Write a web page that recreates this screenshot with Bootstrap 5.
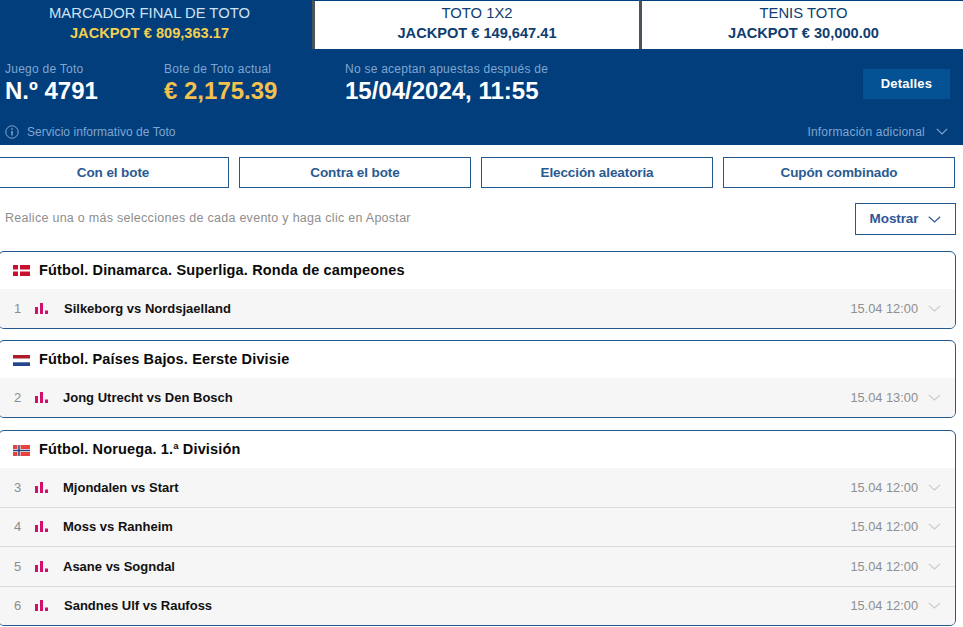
<!DOCTYPE html>
<html lang="es">
<head>
<meta charset="utf-8">
<title>Toto</title>
<link rel="stylesheet" href="https://cdn.jsdelivr.net/npm/bootstrap@5.3.0/dist/css/bootstrap.min.css">
<style>
html,body{height:627px;overflow:hidden}
body{font-family:"Liberation Sans",Arial,sans-serif;background:#fff;color:#111;width:963px}
.hero{background:#023e7b;height:145px}
.tabrow{height:49px}
.tabx{flex:0 0 auto;text-align:center;height:49px;background:#fff;color:#0f3d70;border-top:1px solid #023e7b;padding-top:3px}
.tabx.first{width:312px;background:#023e7b;color:#cfe2f5;padding-right:13px}
.tabx.second{width:327px;border-left:3px solid #4d535b}
.tabx.third{width:324px;border-left:3px solid #4d535b;padding-left:2px}
.tabname{font-size:14.8px;line-height:18px;margin-bottom:2px}
.tabjack{font-size:14.6px;line-height:18px;font-weight:700}
.first .tabjack{color:#f2d04f}
.inforow{height:61px}
.cellx{flex:0 0 auto;padding-top:13px}
.c1{width:164px;padding-left:5px}.c2{width:181px}.c3{width:518px}
.lbl{font-size:12px;line-height:15px;color:#7fa6d3;letter-spacing:.25px}
.val{font-size:24px;line-height:29px;font-weight:700;color:#fff;margin-top:-1px}
.val.gold{color:#f3c14d}
.detbtn{background:#045194;color:#fff;font-size:13px;font-weight:700;width:87px;height:30px;line-height:30px;padding:0;border:0;border-radius:0;margin-top:20px;letter-spacing:.2px}
.foot{height:35px;padding:8px 15px 0 5px;font-size:12px;color:#7fa6d3}
.svc{letter-spacing:.05px}
.more{letter-spacing:.2px}
.gapx{gap:11px}
.pickrow{margin:12px 8px 0 -3px;gap:10px}
.pick{flex:1 1 0;height:31px;line-height:29px;padding:0;border:1px solid #23598f;border-radius:0;background:#fff;color:#2a5a91;font-size:13.5px;font-weight:700;letter-spacing:-.1px}
.hintrow{height:32px;margin:15px 7px 0 5px}
.hint{font-size:12.5px;color:#8e8e8e;letter-spacing:.28px;padding-bottom:2px}
.showbtn{width:101px;height:32px;padding:0;border:1px solid #23598f;border-radius:0;background:#fff;color:#2f5896;font-size:13.5px;font-weight:700;letter-spacing:-.1px;gap:10px}
.grp{margin:0 7px 11.5px -2px;border:1px solid #23598f;border-radius:6px;overflow:hidden;background:#fff}
.grp.spaced{margin-bottom:12.5px}
.stack{margin-top:16px}
.grphead{height:37px;padding-left:14px;gap:9px;font-size:14.5px;font-weight:700;color:#0a0a0a;letter-spacing:.15px}
.grphead.lowered{padding-top:1px}
.evt{height:39.5px;background:#f6f6f6;border-top:1px solid #dcdcdc;padding:0 14px 0 15px;font-size:13px;color:#111}
.evt.top{border-top:0;height:38.5px}
.num{width:21px;font-size:13px;color:#8c8c8c;flex:0 0 auto}
.bars{flex:0 0 auto;margin-right:14px}
.mname{font-weight:700;flex:1 1 auto}
.nudge{padding-left:1px}
.when{font-size:12.8px;color:#8f8f8f;margin-right:10px}
</style>
</head>
<body>
<header class="hero">
  <nav class="d-flex tabrow">
    <div class="tabx first"><div class="tabname">MARCADOR FINAL DE TOTO</div><div class="tabjack">JACKPOT € 809,363.17</div></div>
    <div class="tabx second"><div class="tabname">TOTO 1X2</div><div class="tabjack">JACKPOT € 149,647.41</div></div>
    <div class="tabx third"><div class="tabname">TENIS TOTO</div><div class="tabjack">JACKPOT € 30,000.00</div></div>
  </nav>
  <div class="d-flex inforow">
    <div class="cellx c1"><div class="lbl">Juego de Toto</div><div class="val">N.º 4791</div></div>
    <div class="cellx c2"><div class="lbl">Bote de Toto actual</div><div class="val gold">€ 2,175.39</div></div>
    <div class="cellx c3"><div class="lbl">No se aceptan apuestas después de</div><div class="val">15/04/2024, 11:55</div></div>
    <button class="btn detbtn" type="button">Detalles</button>
  </div>
  <div class="d-flex align-items-center justify-content-between foot">
    <div class="d-flex align-items-center gap-2">
      <svg width="14" height="14" viewBox="0 0 14 14" fill="none" stroke="#7fa6d3"><circle cx="7" cy="7" r="6.2"/><path d="M7 6v4.5" stroke-width="1.5"/><path d="M7 3.2v1.5" stroke-width="1.5"/></svg>
      <span class="svc">Servicio informativo de Toto</span>
    </div>
    <div class="d-flex align-items-center gapx">
      <span class="more">Información adicional</span>
      <svg width="12" height="7" viewBox="0 0 12 7" fill="none" stroke="#7fa6d3" stroke-width="1.2"><path d="M.8.8 6 6 11.2.8"/></svg>
    </div>
  </div>
</header>
<main>
  <div class="d-flex pickrow">
    <button class="btn pick" type="button">Con el bote</button>
    <button class="btn pick" type="button">Contra el bote</button>
    <button class="btn pick" type="button">Elección aleatoria</button>
    <button class="btn pick" type="button">Cupón combinado</button>
  </div>
  <div class="d-flex align-items-center justify-content-between hintrow">
    <span class="hint">Realice una o más selecciones de cada evento y haga clic en Apostar</span>
    <button class="btn showbtn d-flex align-items-center justify-content-center" type="button"><span>Mostrar</span>
      <svg width="13" height="7" viewBox="0 0 13 7" fill="none" stroke="#2f5896" stroke-width="1.2"><path d="M.8.8 6.5 6 12.2.8"/></svg></button>
  </div>
  <div class="stack">
    <section class="grp">
      <div class="d-flex align-items-center grphead">
        <svg width="17" height="11" viewBox="0 0 17 11"><rect width="17" height="11" fill="#c8102e"/><path d="M0 5.5h17M6 0v11" stroke="#fff" stroke-width="2"/></svg>
        <span>Fútbol. Dinamarca. Superliga. Ronda de campeones</span>
      </div>
      <div class="d-flex align-items-center evt top">
        <span class="num">1</span>
        <svg class="bars" width="14" height="11" viewBox="0 0 14 11" fill="#d0106a"><rect y="4" width="3" height="7"/><rect x="5" width="3" height="11"/><rect x="10" y="7.5" width="3" height="3.5"/></svg>
        <span class="mname nudge">Silkeborg vs Nordsjaelland</span><span class="when">15.04 12:00</span>
        <svg width="13" height="7" viewBox="0 0 13 7" fill="none" stroke="#c9c9c9" stroke-width="1.1"><path d="M.8.8 6.5 6 12.2.8"/></svg>
      </div>
    </section>
    <section class="grp spaced">
      <div class="d-flex align-items-center grphead lowered">
        <svg width="17" height="11" viewBox="0 0 17 11"><rect width="17" height="3.7" fill="#ae1c28"/><rect y="3.7" width="17" height="3.6" fill="#fff"/><rect y="7.3" width="17" height="3.7" fill="#21468b"/></svg>
        <span>Fútbol. Países Bajos. Eerste Divisie</span>
      </div>
      <div class="d-flex align-items-center evt top">
        <span class="num">2</span>
        <svg class="bars" width="14" height="11" viewBox="0 0 14 11" fill="#d0106a"><rect y="4" width="3" height="7"/><rect x="5" width="3" height="11"/><rect x="10" y="7.5" width="3" height="3.5"/></svg>
        <span class="mname">Jong Utrecht vs Den Bosch</span><span class="when">15.04 13:00</span>
        <svg width="13" height="7" viewBox="0 0 13 7" fill="none" stroke="#c9c9c9" stroke-width="1.1"><path d="M.8.8 6.5 6 12.2.8"/></svg>
      </div>
    </section>
    <section class="grp">
      <div class="d-flex align-items-center grphead lowered">
        <svg width="17" height="11" viewBox="0 0 17 11"><rect width="17" height="11" fill="#e8423f"/><path d="M0 5.5h17M6 0v11" stroke="#fff" stroke-width="3"/><path d="M0 5.5h17M6 0v11" stroke="#1f3f7a" stroke-width="1.5"/></svg>
        <span>Fútbol. Noruega. 1.ª División</span>
      </div>
      <div class="d-flex align-items-center evt top">
        <span class="num">3</span>
        <svg class="bars" width="14" height="11" viewBox="0 0 14 11" fill="#d0106a"><rect y="4" width="3" height="7"/><rect x="5" width="3" height="11"/><rect x="10" y="7.5" width="3" height="3.5"/></svg>
        <span class="mname">Mjondalen vs Start</span><span class="when">15.04 12:00</span>
        <svg width="13" height="7" viewBox="0 0 13 7" fill="none" stroke="#c9c9c9" stroke-width="1.1"><path d="M.8.8 6.5 6 12.2.8"/></svg>
      </div>
      <div class="d-flex align-items-center evt">
        <span class="num">4</span>
        <svg class="bars" width="14" height="11" viewBox="0 0 14 11" fill="#d0106a"><rect y="4" width="3" height="7"/><rect x="5" width="3" height="11"/><rect x="10" y="7.5" width="3" height="3.5"/></svg>
        <span class="mname">Moss vs Ranheim</span><span class="when">15.04 12:00</span>
        <svg width="13" height="7" viewBox="0 0 13 7" fill="none" stroke="#c9c9c9" stroke-width="1.1"><path d="M.8.8 6.5 6 12.2.8"/></svg>
      </div>
      <div class="d-flex align-items-center evt">
        <span class="num">5</span>
        <svg class="bars" width="14" height="11" viewBox="0 0 14 11" fill="#d0106a"><rect y="4" width="3" height="7"/><rect x="5" width="3" height="11"/><rect x="10" y="7.5" width="3" height="3.5"/></svg>
        <span class="mname">Asane vs Sogndal</span><span class="when">15.04 12:00</span>
        <svg width="13" height="7" viewBox="0 0 13 7" fill="none" stroke="#c9c9c9" stroke-width="1.1"><path d="M.8.8 6.5 6 12.2.8"/></svg>
      </div>
      <div class="d-flex align-items-center evt">
        <span class="num">6</span>
        <svg class="bars" width="14" height="11" viewBox="0 0 14 11" fill="#d0106a"><rect y="4" width="3" height="7"/><rect x="5" width="3" height="11"/><rect x="10" y="7.5" width="3" height="3.5"/></svg>
        <span class="mname nudge">Sandnes Ulf vs Raufoss</span><span class="when">15.04 12:00</span>
        <svg width="13" height="7" viewBox="0 0 13 7" fill="none" stroke="#c9c9c9" stroke-width="1.1"><path d="M.8.8 6.5 6 12.2.8"/></svg>
      </div>
    </section>
  </div>
</main>
</body>
</html>
